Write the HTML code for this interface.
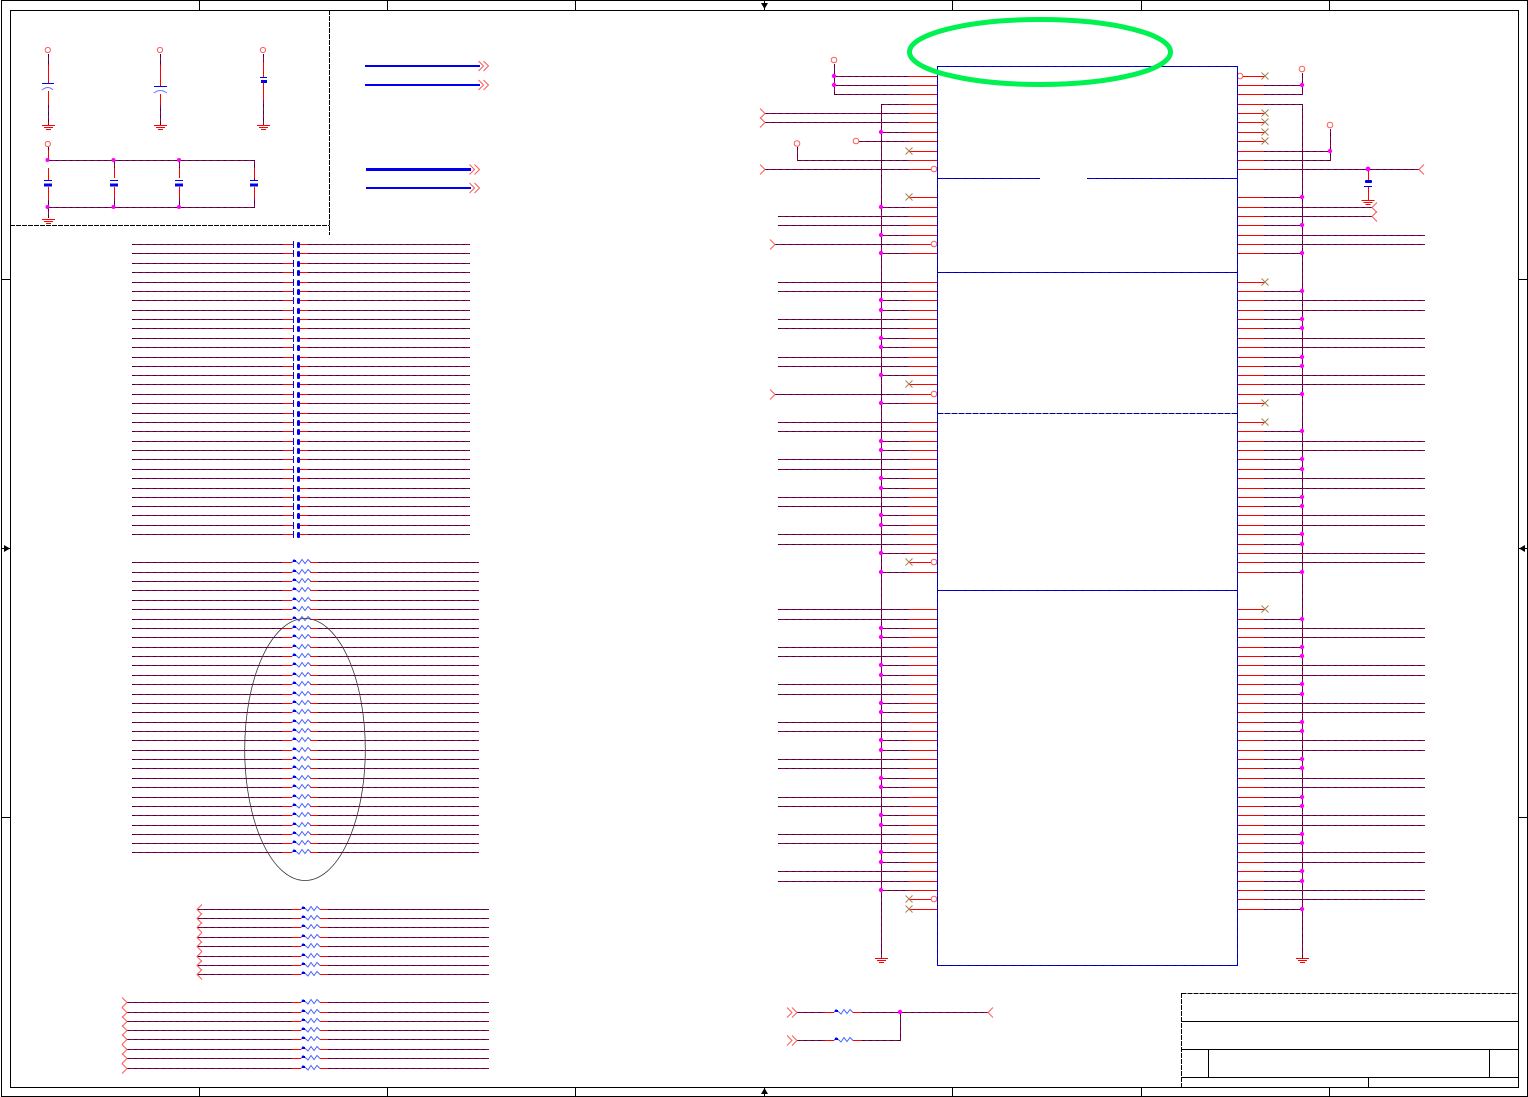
<!DOCTYPE html>
<html lang="en"><head><meta charset="utf-8"><title>Schematic</title>
<style>
html,body{margin:0;padding:0;background:#fff;width:1528px;height:1097px;overflow:hidden}
svg{display:block}
path,line,rect{shape-rendering:crispEdges}
.a{shape-rendering:auto}
.d{stroke:#8c0050;fill:none}
.e{stroke:#4c0038;fill:none;stroke-dasharray:3 4}
.r{stroke:#f00;fill:none}
.k{stroke:#000;fill:none}
.kd{stroke:#000;fill:none;stroke-dasharray:5 1}
.b{stroke:#0000e0;fill:none}
.b2{stroke:#00004a;fill:none;stroke-dasharray:2 7}
.dot{fill:#f0f}
.c{stroke:#ff5a5a;fill:none;shape-rendering:auto}
.x{stroke:#a8804f;fill:none;shape-rendering:auto}
.z{stroke:#4a62ff;fill:none;shape-rendering:auto}
.bl{fill:#0000f0;shape-rendering:auto}
</style></head><body>
<svg xmlns="http://www.w3.org/2000/svg" width="1528" height="1097" viewBox="0 0 1528 1097">
<defs>
<path id="X" class="x a" d="M-3.5 -3.5L3.5 3.5M3.5 -3.5L-3.5 3.5"/>
<g id="G"><path class="r" d="M-6 .5H7M-4 2.5H5M-2 4.5H3"/></g>
<path id="A1" class="c" d="M-5 -5L0 0L-5 5"/>
<path id="A2" class="c" d="M5 -5L0 0L5 5"/>
<path id="DC" class="c" d="M0 -5L5 0L0 5M5 -5L10 0L5 5"/>
<g id="ll"><path class="d" d="M778 .5H909"/><path class="e" d="M778 .5H909"/><path class="r" d="M909 .5H937"/></g>
<g id="lb"><path class="d" d="M881 .5H909"/><path class="e" d="M881 .5H909"/><path class="r" d="M909 .5H937"/><circle class="dot" cx="881" cy="0" r="2.2"/></g>
<g id="lx"><path class="r" d="M909 .5H937"/><use href="#X" x="909" y="0"/></g>
<g id="rl"><path class="r" d="M1237 .5H1264"/><path class="d" d="M1264 .5H1425"/><path class="e" d="M1264 .5H1425"/></g>
<g id="rb"><path class="r" d="M1237 .5H1264"/><path class="d" d="M1264 .5H1302"/><path class="e" d="M1264 .5H1302"/><circle class="dot" cx="1302" cy="0" r="2.2"/></g>
<g id="rx"><path class="r" d="M1237 .5H1265"/><use href="#X" x="1265" y="0"/></g>
<g id="cr"><path class="d" d="M132 .5H283M308 .5H470"/><path class="e" d="M132 .5H283M308 .5H470"/><path class="r" d="M283 .5H293M300 .5H308"/><rect x="293" y="-3" width="1" height="7" fill="#0000f0"/><rect class="bl" x="297" y="-2" width="3" height="6" rx="1.4"/></g>
<g id="Z"><path class="z" d="M0 .5L2 -2.5L7 2L10 -2.5L13 1.5L16 -2.5L19 .5"/><rect class="bl" x="1" y="-2" width="3" height="2"/></g>
<g id="r1"><path class="d" d="M132 .5H282M318 .5H479"/><path class="e" d="M132 .5H282M318 .5H479"/><path class="r" d="M282 .5H292M310 .5H318"/><use href="#Z" x="292"/></g>
<g id="r2"><path class="d" d="M197 .5H292M328 .5H489"/><path class="e" d="M197 .5H292M328 .5H489"/><path class="r" d="M292 .5H301M320 .5H328"/><use href="#Z" x="301"/><use href="#A2" x="197" y=".5"/></g>
<g id="r3"><path class="d" d="M127 .5H292M328 .5H489"/><path class="e" d="M127 .5H292M328 .5H489"/><path class="r" d="M292 .5H301M320 .5H328"/><use href="#Z" x="301"/><use href="#A1" x="127" y=".5"/></g>
<path id="W" d="M834.5 64V94.5M834 76.5H909M834 85.5H909M834 94.5H909M881.5 104V958M881 104.5H909M765 113.5H909M765 122.5H909M859 141.5H909M797.5 147V160.5H909M765 169.5H909M775 244.5H909M775 394.5H909
M1264 85.5H1302M1264 94.5H1302.5V73M1264 104.5H1302.5V958M1264 151.5H1330M1264 160.5H1330.5V129M1264 169.5H1419M1264 207.5H1372M1264 216.5H1372
M48.5 147V160M48.5 160.5H254.5V180M48.5 207.5H254.5V187M114.5 160V178M114.5 187V207M179.5 160V178M179.5 187V207M48.5 187V218M48.5 54V83M48.5 91V125M160.5 54V86M160.5 94V125M263.5 54V77M263.5 83V125
M797 1012.5H825M862 1012.5H988M797 1040.5H825M862 1040.5H900.5V1012"/>
</defs>

<!-- frames -->
<rect class="k" x="1.5" y=".5" width="1526" height="1096"/>
<rect class="k" x="10.5" y="10.5" width="1508" height="1077"/>
<path class="k" d="M199.5 0V10M387.5 0V10M575.5 0V10M764.5 0V10M952.5 0V10M1141.5 0V10M1329.5 0V10M199.5 1087V1097M387.5 1087V1097M575.5 1087V1097M764.5 1087V1097M952.5 1087V1097M1141.5 1087V1097M1329.5 1087V1097M1 279.5H10M1 548.5H10M1 817.5H10M1518 279.5H1528M1518 548.5H1528M1518 817.5H1528"/>
<path d="M761 3H768L764.5 9ZM761 1094H768L764.5 1088ZM4 545V552L10 548.5ZM1525 545V552L1519 548.5Z" fill="#000" style="shape-rendering:auto"/>
<path class="kd" d="M329.5 10V235M10 225.5H329.5"/>

<!-- title block -->
<path class="kd" d="M1181.5 993.5H1518M1181.5 993V1087"/>
<path class="k" d="M1181 1021.5H1518M1181 1049.5H1518M1181 1077.5H1518M1208.5 1049V1077M1489.5 1049V1077M1368.5 1077V1087"/>

<!-- wires -->
<use href="#W" class="d"/>
<use href="#W" class="e"/>
<path class="r" d="M48.5 65V83M48.5 91V105M48.5 150V158M48.5 168V180M48.5 187V200M114.5 168V178M114.5 187V198M179.5 168V178M179.5 187V198M254.5 168V178M254.5 187V198M160.5 65V86M160.5 94V105M263.5 62V77M263.5 83V100
M909 76.5H937M909 85.5H937M909 94.5H937M909 104.5H937M909 113.5H937M909 122.5H937M909 141.5H937M909 160.5H937M909 169.5H931M909 244.5H931M909 394.5H931
M1243 76.5H1265M1237 85.5H1264M1237 94.5H1264M1237 104.5H1264M1237 151.5H1264M1237 160.5H1264M1237 169.5H1264M1237 207.5H1264M1237 216.5H1264
M1368.5 170V180M1368.5 187V200M825 1012.5H834M853 1012.5H862M825 1040.5H834M853 1040.5H862M909 562.5H931M909 899.5H931"/>

<!-- top left symbols -->
<circle class="c" cx="47.8" cy="50" r="2.6"/><circle class="c" cx="160" cy="50" r="2.6"/><circle class="c" cx="263" cy="50" r="2.6"/><circle class="c" cx="47.8" cy="144" r="2.6"/>
<path d="M42 83.5H54M154 86.5H167M260 77.5H267M44 180.5H52M110 180.5H118M175 180.5H183M250 180.5H258" stroke="#0000f0" fill="none"/>
<path d="M42 90Q48 85 53 90M154 93Q160 88 167 93" stroke="#6a78ff" fill="none" class="a"/>
<rect class="bl" x="261" y="80" width="6" height="3"/><rect class="bl" x="44" y="183.5" width="8" height="3"/><rect class="bl" x="110" y="183.5" width="8" height="3"/><rect class="bl" x="175" y="183.5" width="8" height="3"/><rect class="bl" x="250" y="183.5" width="8" height="3"/>
<use href="#G" x="48" y="125"/><use href="#G" x="160" y="125"/><use href="#G" x="263" y="125"/><use href="#G" x="48" y="219"/>
<g class="dot"><circle cx="47.5" cy="160" r="2"/><circle cx="113.5" cy="160" r="2"/><circle cx="179" cy="160" r="2"/><circle cx="47.5" cy="207" r="2"/><circle cx="113.5" cy="207" r="2"/><circle cx="179" cy="207" r="2"/></g>

<!-- blue buses -->
<rect x="365" y="65" width="115" height="2" fill="#0000f0"/><rect x="365" y="84" width="115" height="2" fill="#0000f0"/><rect x="366" y="168" width="105" height="3" fill="#0000f0"/><rect x="366" y="187" width="105" height="2" fill="#0000f0"/>
<use href="#DC" x="478.5" y="66"/><use href="#DC" x="478.5" y="85"/><use href="#DC" x="469.5" y="169.5"/><use href="#DC" x="469.5" y="188"/>

<!-- capacitor rows -->
<use href="#cr" y="244"/><use href="#cr" y="253"/><use href="#cr" y="263"/><use href="#cr" y="272"/><use href="#cr" y="282"/><use href="#cr" y="291"/><use href="#cr" y="300"/><use href="#cr" y="310"/><use href="#cr" y="319"/><use href="#cr" y="328"/><use href="#cr" y="338"/><use href="#cr" y="347"/><use href="#cr" y="357"/><use href="#cr" y="366"/><use href="#cr" y="375"/><use href="#cr" y="384"/><use href="#cr" y="394"/><use href="#cr" y="403"/><use href="#cr" y="413"/><use href="#cr" y="422"/><use href="#cr" y="431"/><use href="#cr" y="441"/><use href="#cr" y="450"/><use href="#cr" y="459"/><use href="#cr" y="469"/><use href="#cr" y="478"/><use href="#cr" y="488"/><use href="#cr" y="497"/><use href="#cr" y="506"/><use href="#cr" y="515"/><use href="#cr" y="525"/><use href="#cr" y="534"/>

<!-- resistor rows 1 -->
<use href="#r1" y="562"/><use href="#r1" y="572"/><use href="#r1" y="581"/><use href="#r1" y="590"/><use href="#r1" y="600"/><use href="#r1" y="609"/><use href="#r1" y="619"/><use href="#r1" y="628"/><use href="#r1" y="637"/><use href="#r1" y="647"/><use href="#r1" y="656"/><use href="#r1" y="665"/><use href="#r1" y="675"/><use href="#r1" y="684"/><use href="#r1" y="694"/><use href="#r1" y="703"/><use href="#r1" y="712"/><use href="#r1" y="722"/><use href="#r1" y="731"/><use href="#r1" y="740"/><use href="#r1" y="750"/><use href="#r1" y="759"/><use href="#r1" y="768"/><use href="#r1" y="778"/><use href="#r1" y="787"/><use href="#r1" y="797"/><use href="#r1" y="806"/><use href="#r1" y="815"/><use href="#r1" y="825"/><use href="#r1" y="834"/><use href="#r1" y="843"/><use href="#r1" y="852"/>
<ellipse cx="305" cy="749.5" rx="60.3" ry="131" fill="none" stroke="#333" stroke-width=".8" style="shape-rendering:auto"/>

<!-- resistor rows 2,3 -->
<use href="#r2" y="909"/><use href="#r2" y="918"/><use href="#r2" y="927"/><use href="#r2" y="937"/><use href="#r2" y="946"/><use href="#r2" y="956"/><use href="#r2" y="965"/><use href="#r2" y="974"/>
<use href="#r3" y="1002"/><use href="#r3" y="1012"/><use href="#r3" y="1021"/><use href="#r3" y="1030"/><use href="#r3" y="1039"/><use href="#r3" y="1049"/><use href="#r3" y="1058"/><use href="#r3" y="1068"/>

<!-- left pins -->
<circle class="dot" cx="834" cy="76" r="2.2"/><circle class="dot" cx="834" cy="85" r="2.2"/>
<circle class="c" cx="834" cy="60" r="2.8"/><circle class="c" cx="856" cy="141" r="2.8"/><circle class="c" cx="797" cy="143.5" r="2.8"/>
<circle class="c" cx="934" cy="169" r="2.8"/><circle class="c" cx="934" cy="244" r="2.8"/><circle class="c" cx="934" cy="394" r="2.8"/><circle class="c" cx="934" cy="562" r="2.8"/><circle class="c" cx="934" cy="899" r="2.8"/>
<use href="#A1" x="765" y="113.5"/><use href="#A1" x="765" y="122.5"/><use href="#A1" x="765" y="169.5"/><use href="#A1" x="775" y="244.5"/><use href="#A1" x="775" y="394.5"/>
<use href="#X" x="909" y="562"/><use href="#X" x="909" y="899"/>
<use href="#lb" y="132"/><use href="#lx" y="151"/><use href="#lx" y="197"/><use href="#lb" y="207"/><use href="#ll" y="216"/><use href="#ll" y="225"/><use href="#lb" y="235"/><use href="#lb" y="253"/>
<use href="#ll" y="282"/><use href="#ll" y="291"/><use href="#lb" y="300"/><use href="#lb" y="310"/><use href="#ll" y="319"/><use href="#ll" y="328"/><use href="#lb" y="338"/><use href="#lb" y="347"/><use href="#ll" y="357"/><use href="#ll" y="366"/><use href="#lb" y="375"/><use href="#lx" y="384"/><use href="#lb" y="403"/>
<use href="#ll" y="422"/><use href="#ll" y="431"/><use href="#lb" y="441"/><use href="#lb" y="450"/><use href="#ll" y="459"/><use href="#ll" y="469"/><use href="#lb" y="478"/><use href="#lb" y="488"/><use href="#ll" y="497"/><use href="#ll" y="506"/><use href="#lb" y="515"/><use href="#lb" y="525"/><use href="#ll" y="534"/><use href="#ll" y="544"/><use href="#lb" y="553"/><use href="#lb" y="572"/>
<use href="#ll" y="609"/><use href="#ll" y="619"/><use href="#lb" y="628"/><use href="#lb" y="637"/><use href="#ll" y="647"/><use href="#ll" y="656"/><use href="#lb" y="665"/><use href="#lb" y="675"/><use href="#ll" y="684"/><use href="#ll" y="694"/><use href="#lb" y="703"/><use href="#lb" y="712"/><use href="#ll" y="722"/><use href="#ll" y="731"/><use href="#lb" y="740"/><use href="#lb" y="750"/><use href="#ll" y="759"/><use href="#ll" y="768"/><use href="#lb" y="778"/><use href="#lb" y="787"/><use href="#ll" y="797"/><use href="#ll" y="806"/><use href="#lb" y="815"/><use href="#lb" y="825"/><use href="#ll" y="834"/><use href="#ll" y="843"/><use href="#lb" y="852"/><use href="#lb" y="862"/><use href="#ll" y="871"/><use href="#ll" y="881"/><use href="#lb" y="890"/><use href="#lx" y="909"/>
<use href="#G" x="881" y="958"/>

<!-- right pins -->
<circle class="c" cx="1240" cy="76" r="2.8"/><use href="#X" x="1265" y="76"/>
<circle class="c" cx="1302" cy="69" r="2.8"/><circle class="c" cx="1330" cy="125" r="2.8"/>
<circle class="dot" cx="1302" cy="85" r="2.2"/><circle class="dot" cx="1330" cy="151" r="2.2"/><circle class="dot" cx="1368" cy="169" r="2.4"/>
<use href="#rx" y="113"/><use href="#rx" y="122"/><use href="#rx" y="132"/><use href="#rx" y="141"/>
<use href="#A2" x="1419" y="169.5"/><use href="#A2" x="1372" y="207.5"/><use href="#A2" x="1372" y="216.5"/>
<rect class="bl" x="1365" y="180" width="7" height="3" rx="1"/><rect x="1364" y="186" width="8" height="1" fill="#0000f0"/>
<use href="#G" x="1367.5" y="200"/>
<use href="#rb" y="197"/><use href="#rb" y="225"/><use href="#rl" y="235"/><use href="#rl" y="244"/><use href="#rb" y="253"/>
<use href="#rx" y="282"/><use href="#rb" y="291"/><use href="#rl" y="300"/><use href="#rl" y="310"/><use href="#rb" y="319"/><use href="#rb" y="328"/><use href="#rl" y="338"/><use href="#rl" y="347"/><use href="#rb" y="357"/><use href="#rb" y="366"/><use href="#rl" y="375"/><use href="#rl" y="384"/><use href="#rb" y="394"/><use href="#rx" y="403"/>
<use href="#rx" y="422"/><use href="#rb" y="431"/><use href="#rl" y="441"/><use href="#rl" y="450"/><use href="#rb" y="459"/><use href="#rb" y="469"/><use href="#rl" y="478"/><use href="#rl" y="488"/><use href="#rb" y="497"/><use href="#rb" y="506"/><use href="#rl" y="515"/><use href="#rl" y="525"/><use href="#rb" y="534"/><use href="#rb" y="544"/><use href="#rl" y="553"/><use href="#rl" y="562"/><use href="#rb" y="572"/>
<use href="#rx" y="609"/><use href="#rb" y="619"/><use href="#rl" y="628"/><use href="#rl" y="637"/><use href="#rb" y="647"/><use href="#rb" y="656"/><use href="#rl" y="665"/><use href="#rl" y="675"/><use href="#rb" y="684"/><use href="#rb" y="694"/><use href="#rl" y="703"/><use href="#rl" y="712"/><use href="#rb" y="722"/><use href="#rb" y="731"/><use href="#rl" y="740"/><use href="#rl" y="750"/><use href="#rb" y="759"/><use href="#rb" y="768"/><use href="#rl" y="778"/><use href="#rl" y="787"/><use href="#rb" y="797"/><use href="#rb" y="806"/><use href="#rl" y="815"/><use href="#rl" y="825"/><use href="#rb" y="834"/><use href="#rb" y="843"/><use href="#rl" y="852"/><use href="#rl" y="862"/><use href="#rb" y="871"/><use href="#rb" y="881"/><use href="#rl" y="890"/><use href="#rl" y="899"/><use href="#rb" y="909"/>
<use href="#G" x="1302" y="958"/>

<!-- chip -->
<path class="b" d="M937.5 66.5H1237.5V965.5H937.5ZM937.5 178.5H1040M1087 178.5H1237.5M937.5 272.5H1237.5M937.5 590.5H1237.5"/>
<path class="b2" d="M937.5 66.5H1237.5V965.5H937.5ZM937.5 178.5H1040M1087 178.5H1237.5M937.5 272.5H1237.5M937.5 590.5H1237.5"/>
<path d="M937.5 413.5H1237.5" stroke="#000090" stroke-dasharray="6 1" fill="none"/>

<!-- bottom resistors -->
<use href="#DC" x="787" y="1012.5"/><use href="#DC" x="787" y="1040.5"/>
<use href="#Z" x="834" y="1012"/><use href="#Z" x="834" y="1040"/>
<circle class="dot" cx="900" cy="1012" r="2.2"/>
<use href="#A2" x="988" y="1012.5"/>

<!-- green ellipse -->
<ellipse cx="1040" cy="52" rx="130.5" ry="32.5" fill="none" stroke="#00f250" stroke-width="5" style="shape-rendering:auto"/>
</svg>
</body></html>
